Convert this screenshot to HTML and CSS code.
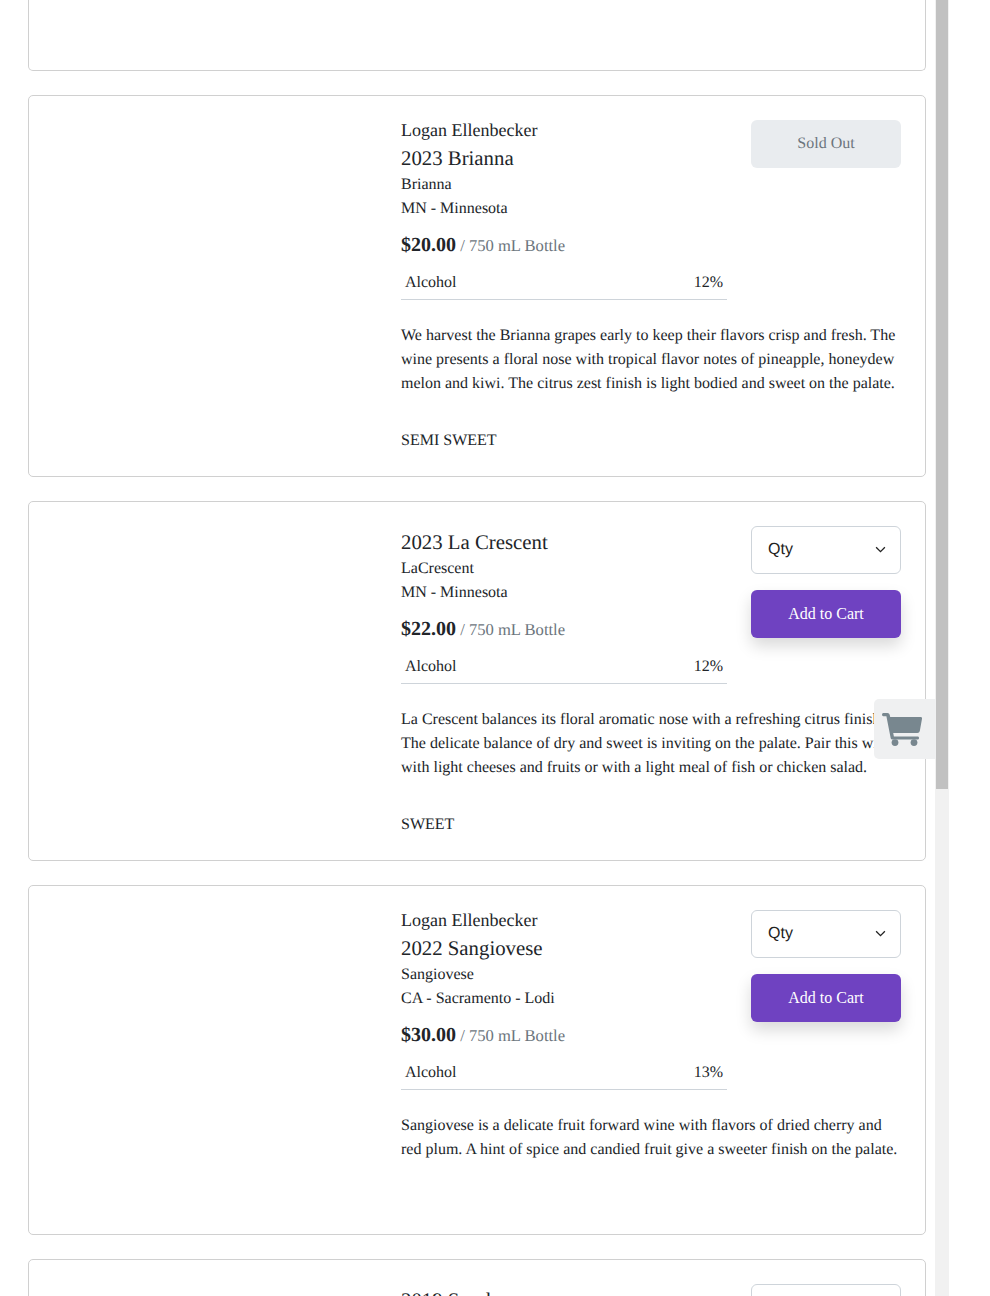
FILE: index.html
```html
<!DOCTYPE html>
<html lang="en">

<head>
  <meta charset="UTF-8" />
  <title>Wines</title>
  <link rel="stylesheet" href="styles.css">
</head>

<body>
  <div class="page">
    <main class="wine-list">
      <div class="wine-card wine-card-cut"></div>

      <div class="wine-card">
        <div class="wine-info">
          <div class="wine-top">
            <div class="wine-head">
              <div class="producer">Logan Ellenbecker</div>
              <h2>2023 Brianna</h2>
              <div class="line">Brianna</div>
              <div class="line">MN - Minnesota</div>
              <div class="price"><strong>$20.00</strong> <span>/ 750 mL Bottle</span></div>
              <div class="spec"><span>Alcohol</span><span>12%</span></div>
            </div>
            <div class="wine-actions">
              <div class="sold-out">Sold Out</div>
            </div>
          </div>
          <p class="desc">We harvest the Brianna grapes early to keep their flavors crisp and fresh. The wine presents a floral nose with tropical flavor notes of pineapple, honeydew melon and kiwi. The citrus zest finish is light bodied and sweet on the palate.</p>
          <div class="tag">SEMI SWEET</div>
        </div>
      </div>

      <div class="wine-card">
        <div class="wine-info">
          <div class="wine-top">
            <div class="wine-head">
              <h2>2023 La Crescent</h2>
              <div class="line">LaCrescent</div>
              <div class="line">MN - Minnesota</div>
              <div class="price"><strong>$22.00</strong> <span>/ 750 mL Bottle</span></div>
              <div class="spec"><span>Alcohol</span><span>12%</span></div>
            </div>
            <div class="wine-actions">
              <div class="qty">Qty
                <svg width="11" height="7" viewBox="0 0 12 8"><path d="M1 1.5l5 5 5-5" fill="none" stroke="#222" stroke-width="1.5"/></svg>
              </div>
              <button class="add-to-cart">Add to Cart</button>
            </div>
          </div>
          <p class="desc">La Crescent balances its floral aromatic nose with a refreshing citrus finish. The delicate balance of dry and sweet is inviting on the palate. Pair this wine with light cheeses and fruits or with a light meal of fish or chicken salad.</p>
          <div class="tag">SWEET</div>
        </div>
      </div>

      <div class="wine-card">
        <div class="wine-info">
          <div class="wine-top">
            <div class="wine-head">
              <div class="producer">Logan Ellenbecker</div>
              <h2>2022 Sangiovese</h2>
              <div class="line">Sangiovese</div>
              <div class="line">CA - Sacramento - Lodi</div>
              <div class="price"><strong>$30.00</strong> <span>/ 750 mL Bottle</span></div>
              <div class="spec"><span>Alcohol</span><span>13%</span></div>
            </div>
            <div class="wine-actions">
              <div class="qty">Qty
                <svg width="11" height="7" viewBox="0 0 12 8"><path d="M1 1.5l5 5 5-5" fill="none" stroke="#222" stroke-width="1.5"/></svg>
              </div>
              <button class="add-to-cart">Add to Cart</button>
            </div>
          </div>
          <p class="desc">Sangiovese is a delicate fruit forward wine with flavors of dried cherry and red plum. A hint of spice and candied fruit give a sweeter finish on the palate.</p>
          <div class="tag"></div>
        </div>
      </div>

      <div class="wine-card">
        <div class="wine-info">
          <div class="wine-top">
            <div class="wine-head">
              <h2>2019 Syrah</h2>
            </div>
            <div class="wine-actions">
              <div class="qty"></div>
            </div>
          </div>
        </div>
      </div>
    </main>

    <div class="scrollbar">
      <div class="scrollbar-thumb"></div>
    </div>
  </div>

  <div class="cart-float">
    <svg width="40" height="33" viewBox="0 0 40 33">
      <path fill="#78878f" d="M1.3 0H5.5Q7.3 0 7.7 1.8L8.2 4H38.6Q40.3 4 40 5.7L37.8 18Q37.4 20 35.4 20H11.2L11.9 23.4H35.6Q37 23.4 37 24.8V25.2Q37 26.6 35.6 26.6H10.4Q9 26.6 8.7 25.2L4.4 3.2H1.3Q0 3.2 0 1.6 0 0 1.3 0Z"/>
      <circle fill="#78878f" cx="13" cy="29.6" r="3.4"/>
      <circle fill="#78878f" cx="32" cy="29.6" r="3.4"/>
    </svg>
  </div>
</body>

</html>
```

FILE: styles.css
```css
body {
  font-family: "Liberation Serif", serif;
  background: white;
  margin: 0;
  padding: 0;
  color: #212529;
  font-size: 16px;
  line-height: 24px;
  text-rendering: geometricPrecision;
}

.page {
  display: flex;
  height: 1296px;
  overflow: hidden;
}

.wine-list {
  width: 898px;
  margin-left: 28px;
  margin-right: 9px;
  flex-shrink: 0;
}

.wine-card {
  border: 1px solid #d0d0d0;
  border-radius: 5px;
  padding: 24px 24px 23px;
  margin-bottom: 24px;
  display: flex;
  justify-content: flex-end;
}

.wine-card-cut {
  height: 71px;
  box-sizing: border-box;
  border-top: none;
  border-radius: 0 0 5px 5px;
}

.wine-info {
  width: 500px;
}

.wine-top {
  display: flex;
  justify-content: space-between;
}

.wine-head {
  width: 326px;
}

.producer {
  font-size: 18px;
  line-height: 21.6px;
}

h2 {
  font-size: 20.8px;
  font-weight: normal;
  line-height: 29.2px;
  padding-top: 2.3px;
  margin: 0;
}

.price {
  margin-top: 11.7px;
  font-size: 16.6px;
}

.price strong {
  font-size: 20px;
}

.price span {
  color: #6c757d;
}

.spec {
  display: flex;
  justify-content: space-between;
  padding: 2.4px 4px 3.6px;
  margin-top: 11px;
  border-bottom: 1px solid #ced4da;
}

.wine-actions {
  width: 150px;
  display: flex;
  flex-direction: column;
  gap: 16px;
}

.sold-out {
  height: 48px;
  line-height: 48px;
  text-align: center;
  background: #e9ecef;
  color: #6c757d;
  border-radius: 6px;
}

.qty {
  height: 48px;
  box-sizing: border-box;
  border: 1px solid #ced4da;
  border-radius: 6px;
  padding: 0 14px 0 16px;
  display: flex;
  justify-content: space-between;
  align-items: center;
  font-family: "Liberation Sans", sans-serif;
  color: #222;
}

.add-to-cart {
  height: 48px;
  border: none;
  border-radius: 6px;
  background: #6f42c1;
  color: white;
  font-family: inherit;
  font-size: 16px;
  box-shadow: 0 8px 16px rgba(0, 0, 0, 0.15);
  cursor: pointer;
}

.desc {
  margin: 24.4px 0 0;
}

.tag {
  margin-top: 32.6px;
  min-height: 16px;
}

.scrollbar {
  width: 14px;
  height: 1296px;
  background: #f1f1f1;
  flex-shrink: 0;
}

.scrollbar-thumb {
  width: 12px;
  height: 789px;
  margin-left: 1px;
  background: #c1c1c1;
}

.cart-float {
  position: absolute;
  left: 874px;
  top: 699px;
  width: 54px;
  height: 60px;
  padding-left: 8px;
  background: #eff0f1;
  border-radius: 5px 0 0 5px;
  display: flex;
  align-items: center;
}
```
